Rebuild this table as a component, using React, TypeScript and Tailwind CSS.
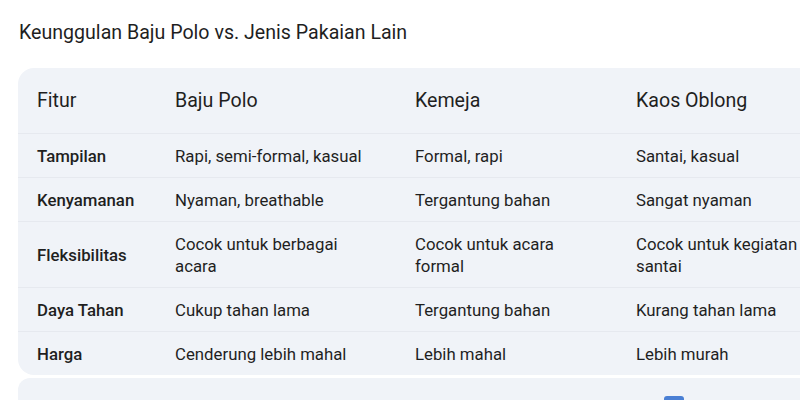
import React from "react";

const rows = [
  ["Tampilan", "Rapi, semi-formal, kasual", "Formal, rapi", "Santai, kasual"],
  ["Kenyamanan", "Nyaman, breathable", "Tergantung bahan", "Sangat nyaman"],
  ["Fleksibilitas", "Cocok untuk berbagai acara", "Cocok untuk acara formal", "Cocok untuk kegiatan santai"],
  ["Daya Tahan", "Cukup tahan lama", "Tergantung bahan", "Kurang tahan lama"],
  ["Harga", "Cenderung lebih mahal", "Lebih mahal", "Lebih murah"],
];

export default function App() {
  return (
    <div
      className="w-[800px] h-[400px] overflow-hidden bg-white text-[#1f1f1f]"
      style={{ fontFamily: "Roboto, 'Noto Sans', sans-serif" }}
    >
      <div className="pl-[19px] pt-[21px] text-[19.6px] leading-[24px] whitespace-nowrap">
        Keunggulan Baju Polo vs. Jenis Pakaian Lain
      </div>
      <div className="ml-[18px] mt-[23px] w-[860px] rounded-[16px] bg-[#f0f3f8]">
        <div className="grid grid-cols-[138px_240px_221px_261px] border-b border-[#e6e9ef] h-[66px] items-center text-[19.6px] whitespace-nowrap">
          <div className="pl-[19px]">Fitur</div>
          <div className="pl-[19px]">Baju Polo</div>
          <div className="pl-[19px]">Kemeja</div>
          <div className="pl-[19px]">Kaos Oblong</div>
        </div>
        {rows.map((r, i) => (
          <div
            key={i}
            className={`grid grid-cols-[138px_240px_221px_261px] items-center text-[16.8px] leading-[22px] pt-[11px] ${
              i < rows.length - 1 ? "pb-[10px] border-b border-[#e6e9ef]" : "pb-[10px]"
            }`}
          >
            <div className="pl-[19px] pr-[6px] font-medium">{r[0]}</div>
            <div className="pl-[19px] pr-[19px]">{r[1]}</div>
            <div className="pl-[19px] pr-[19px]">{r[2]}</div>
            <div className="pl-[19px] pr-[50px]">{r[3]}</div>
          </div>
        ))}
      </div>
      <div className="ml-[18px] mt-[3px] w-[860px] h-[60px] rounded-[12px] bg-[#f0f3f8] relative">
        <div className="absolute left-[646px] top-[18px] w-[20px] h-[20px] rounded-[3px] bg-[#4a7fd4]" />
      </div>
    </div>
  );
}
